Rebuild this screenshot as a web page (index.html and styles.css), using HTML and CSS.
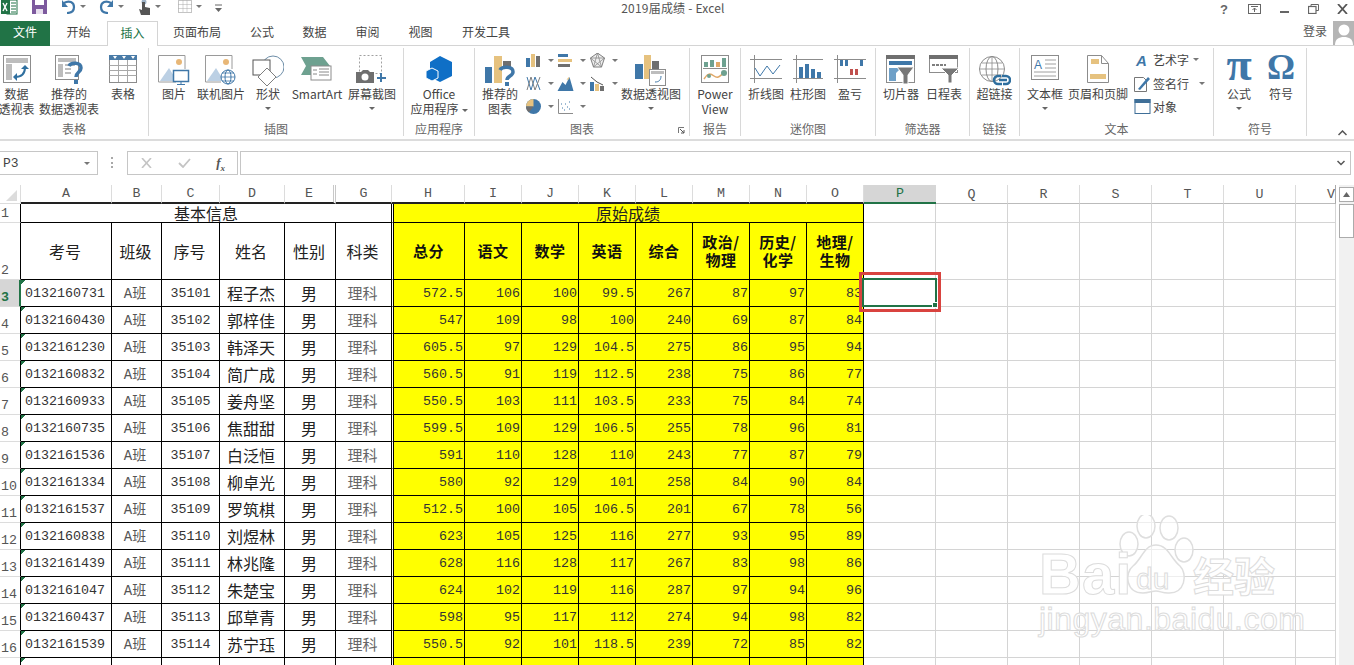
FILE: index.html
```html
<!DOCTYPE html>
<html lang="zh-CN">
<head>
<meta charset="utf-8">
<title>2019届成绩 - Excel</title>
<link rel="stylesheet" href="styles.css">
</head>
<body>
<div class="app">
  <header class="titlebar">
    <div class="qat">
      <svg class="q-x" width="17" height="15" viewBox="0 0 17 15"><rect x="6" y="0" width="10" height="14" fill="#fff" stroke="#217346"/><path d="M10 3h5M10 6h5M10 9h5M10 12h5" stroke="#217346"/><rect x="0" y="0" width="9" height="14" fill="#217346"/><path d="M2 3l4 8M6 3l-4 8" stroke="#fff" stroke-width="1.4"/></svg>
      <svg class="q-s" width="15" height="14" viewBox="0 0 15 14"><path d="M0 0h15v14H0z" fill="#7d5a9e"/><rect x="3" y="0" width="9" height="5" fill="#fff"/><rect x="4" y="9" width="7" height="5" fill="#e8e0ee"/></svg>
      <svg class="q-u" width="15" height="14" viewBox="0 0 15 14"><path d="M3 3c5-3 10-1 10 4s-4 6-7 6" fill="none" stroke="#3f77a8" stroke-width="2.2"/><path d="M1 0v7h6z" fill="#3f77a8"/></svg>
      <i class="mini q-c1"></i>
      <svg class="q-r" width="15" height="14" viewBox="0 0 15 14"><path d="M12 3C7 0 2 2 2 7s4 6 7 6" fill="none" stroke="#3f77a8" stroke-width="2.2"/><path d="M14 0v7H8z" fill="#3f77a8"/></svg>
      <i class="mini q-c2"></i>
      <svg class="q-t" width="13" height="15" viewBox="0 0 13 15"><circle cx="6" cy="2" r="2.5" fill="#9fb4c8"/><path d="M4 2h3v5l5 1v7H3L1 9l3 1z" fill="#555"/></svg>
      <i class="mini q-c3"></i>
      <svg class="q-g" width="14" height="13" viewBox="0 0 14 13"><rect x=".5" y=".5" width="13" height="12" fill="#fff" stroke="#888" stroke-dasharray="1 1"/><path d="M.5 4.5h13M.5 8.5h13M5 .5v12M9 .5v12" stroke="#aaa" stroke-dasharray="1 1"/></svg>
      <i class="mini q-c4"></i>
      <svg class="q-m" width="7" height="8" viewBox="0 0 7 8"><path d="M0 1h7" stroke="#666"/><path d="M0 4h7L3.500 8z" fill="#666"/></svg>
    </div>
    <div class="doc-title">2019届成绩 - Excel</div>
    <div class="winctl">
      <span class="help">?</span>
      <svg width="13" height="10" viewBox="0 0 13 10"><rect x=".5" y=".5" width="12" height="9" fill="none" stroke="#666"/><path d="M3 2.500h7M6.500 8V4M4.500 6l2-2 2 2" fill="none" stroke="#666"/></svg>
      <svg class="w-min" width="10" height="10" viewBox="0 0 10 10"><path d="M0 8h9" stroke="#666" stroke-width="2"/></svg>
      <svg width="11" height="10" viewBox="0 0 11 10"><path d="M3 2.500V.5h7.500v6H8" fill="none" stroke="#666"/><rect x=".5" y="2.500" width="7.500" height="7" fill="none" stroke="#666" stroke-width="1.200"/></svg>
      <svg width="11" height="10" viewBox="0 0 11 10"><path d="M1 0l9 10M10 0L1 10" stroke="#555" stroke-width="1.800"/></svg>
    </div>
  </header>

  <nav class="tabs">
    <div class="tab file">文件</div>
    <div class="tab w57">开始</div>
    <div class="tab active">插入</div>
    <div class="tab w78">页面布局</div>
    <div class="tab w52">公式</div>
    <div class="tab w53">数据</div>
    <div class="tab w53">审阅</div>
    <div class="tab w53">视图</div>
    <div class="tab w78">开发工具</div>
    <div class="login">登录</div>
    <div class="avatar"><svg width="21" height="24" viewBox="0 0 21 24"><rect width="21" height="24" fill="#b5b5b5"/><circle cx="11" cy="9" r="5.500" fill="#fff"/><path d="M2 24c0-6 4-8 9-8s9 2 9 8z" fill="#fff"/></svg></div>
  </nav>

  <section class="ribbon">
    <div class="group g1">
      <div class="items">
        <div class="item w37 first"><div class="icon"><svg width="28" height="28" viewBox="0 0 28 28"><rect x=".5" y=".5" width="27" height="27" fill="#fff" stroke="#8c8c8c"/><rect x="3" y="3" width="22" height="5" fill="#bdbdbd"/><rect x="3" y="9" width="6" height="16" fill="#bdbdbd"/><path d="M12 22c6 0 10-3 10-10" fill="none" stroke="#2f6f9f" stroke-width="2"/><path d="M18 14l4-4 4 4zM14 18v8l-4-4z" fill="#2f6f9f"/></svg></div><div class="lbl">数据<br>透视表</div></div>
        <div class="item w68"><div class="icon"><svg width="28" height="30" viewBox="0 0 28 30"><rect x=".5" y=".5" width="23" height="24" fill="#fff" stroke="#8c8c8c"/><rect x="3" y="3" width="18" height="4" fill="#bdbdbd"/><rect x="3" y="9" width="5" height="13" fill="#bdbdbd"/><path d="M10 10h10M10 14h6M10 18h6" stroke="#bdbdbd" stroke-width="2"/><path d="M14 11c2-4 12-4 12 2 0 4-5 4-5 9" fill="none" stroke="#3f77a8" stroke-width="3.500"/><rect x="19" y="25" width="4" height="4" fill="#3f77a8"/></svg></div><div class="lbl">推荐的<br>数据透视表</div></div>
        <div class="item w40"><div class="icon"><svg width="28" height="28" viewBox="0 0 28 28"><rect x=".5" y=".5" width="27" height="27" fill="#fff" stroke="#8c8c8c"/><rect x="0" y="0" width="28" height="5" fill="#4a7ba7"/><path d="M.5 10.500h27M.5 15.500h27M.5 20.500h27M9.500 5v22M18.500 5v22" stroke="#a8a8a8"/><path d="M4 1l2 3 2-3zM13 1l2 3 2-3zM22 1l2 3 2-3z" fill="#fff"/></svg></div><div class="lbl">表格</div></div>
      </div>
      <div class="gname">表格</div>
    </div>

    <div class="group g2">
      <div class="items">
        <div class="item w50"><div class="icon"><svg width="32" height="30" viewBox="0 0 32 30"><path d="M27 14V.5H.5V27H18" fill="#fff" stroke="#9a9a9a"/><circle cx="21" cy="7" r="3" fill="#e8b777"/><path d="M2 26l9-13 8 13z" fill="#bcd0e4"/><rect x="15.500" y="15.500" width="15" height="11" fill="#fff" stroke="#3f77a8" stroke-width="1.500"/><path d="M23 27v2M19 29.500h8" stroke="#3f77a8"/></svg></div><div class="lbl">图片</div></div>
        <div class="item w44"><div class="icon"><svg width="32" height="30" viewBox="0 0 32 30"><path d="M27 14V.5H.5V27H16" fill="#fff" stroke="#9a9a9a"/><circle cx="21" cy="7" r="3" fill="#e8b777"/><path d="M2 26l9-13 8 13z" fill="#bcd0e4"/><circle cx="23" cy="22" r="7" fill="#fff" stroke="#3f77a8"/><ellipse cx="23" cy="22" rx="3" ry="7" fill="none" stroke="#3f77a8"/><path d="M16 22h14M17 18h12M17 26h12" stroke="#3f77a8" stroke-width=".8"/></svg></div><div class="lbl">联机图片</div></div>
        <div class="item w50"><div class="icon"><svg width="32" height="32" viewBox="0 0 32 32"><circle cx="21" cy="12" r="11" fill="#fff" stroke="#6e8ea8"/><rect x="1" y="5" width="17" height="15" fill="#fff" stroke="#555"/><path d="M15 13l9 9-9 9-9-9z" fill="#fff" stroke="#7f7f7f"/></svg></div><div class="lbl">形状<i class="caret"></i></div></div>
        <div class="item w48"><div class="icon"><svg width="32" height="28" viewBox="0 0 32 28"><path d="M0 2h22l7 9-7 9H0l5-9z" fill="#6ea190"/><rect x="10" y="11" width="20" height="14" fill="#fff" stroke="#8c8c8c"/><path d="M18 14h10M18 17h10M18 20h10M12 15h4M12 19h4" stroke="#888"/></svg></div><div class="lbl">SmartArt</div></div>
        <div class="item w62"><div class="icon"><svg width="32" height="30" viewBox="0 0 32 30"><rect x="3.500" y=".5" width="22" height="18" fill="none" stroke="#a0a0a0" stroke-dasharray="2 2"/><path d="M0 17h5l2-2h5l2 2h4v11H0z" fill="#6f6f6f"/><circle cx="9" cy="22" r="3.500" fill="#fff"/><path d="M25 18v9M21 23h9" stroke="#3f77a8" stroke-width="2"/></svg></div><div class="lbl">屏幕截图<i class="caret"></i></div></div>
      </div>
      <div class="gname">插图</div>
    </div>

    <div class="group g3">
      <div class="items">
        <div class="item w70"><div class="icon"><svg width="30" height="30" viewBox="0 0 30 30"><path d="M16 1l12 6v14l-12 6-6-3v-8l-4-2V7z" fill="#0f6fc6"/><path d="M8 13l6 3v7l-6 3-6-3v-7z" fill="#0f6fc6" stroke="#fff"/></svg></div><div class="lbl">Office<br>应用程序<i class="caret side"></i></div></div>
      </div>
      <div class="gname">应用程序</div>
    </div>

    <div class="group g4">
      <div class="items">
        <div class="item w50"><div class="icon"><svg width="30" height="32" viewBox="0 0 30 32"><rect x="0" y="12" width="7" height="16" fill="#3f77a8"/><rect x="9" y="1" width="8" height="27" fill="#e6c27f"/><rect x="18" y="6" width="8" height="6" fill="#6f6f6f"/><path d="M15 15c2-4 13-4 13 2 0 4-6 4-6 8" fill="none" stroke="#3f77a8" stroke-width="3.500"/><rect x="20" y="27" width="4" height="4" fill="#3f77a8"/></svg></div><div class="lbl">推荐的<br>图表</div></div>
        <div class="smallcol w32">
          <div class="sm"><svg width="15" height="13" viewBox="0 0 15 13"><rect y="4" width="4" height="9" fill="#3f77a8"/><rect x="5" width="4" height="13" fill="#e6c27f"/><rect x="10" y="2" width="4" height="11" fill="#6f6f6f"/></svg><i class="mini"></i></div>
          <div class="sm"><svg width="15" height="15" viewBox="0 0 15 15"><path d="M1 1l4 13 4-13 5 13" fill="none" stroke="#3f77a8"/><path d="M1 14l4-13 4 13 5-13" fill="none" stroke="#7f7f7f"/></svg><i class="mini"></i></div>
          <div class="sm"><svg width="15" height="15" viewBox="0 0 15 15"><circle cx="7.500" cy="7.500" r="7.500" fill="#3f77a8"/><path d="M7.500 7.500V0A7.500 7.500 0 0 0 0 7.500z" fill="#e6c27f"/><path d="M7.500 7.500H0a7.500 7.500 0 0 0 3 6z" fill="#6f6f6f"/></svg><i class="mini"></i></div>
        </div>
        <div class="smallcol w32">
          <div class="sm"><svg width="15" height="14" viewBox="0 0 15 14"><rect width="10" height="3" fill="#3f77a8"/><rect y="5" width="14" height="3" fill="#e6c27f"/><rect y="10" width="12" height="3" fill="#6f6f6f"/></svg><i class="mini"></i></div>
          <div class="sm"><svg width="16" height="14" viewBox="0 0 16 14"><path d="M0 14l5-9 3 3 4-8 4 14z" fill="#3f77a8"/><path d="M9 3l2-3 1 2z" fill="#e6c27f"/></svg><i class="mini"></i></div>
          <div class="sm"><svg width="15" height="15" viewBox="0 0 15 15"><path d="M.5 0v14.500H15" fill="none" stroke="#8c8c8c"/><path d="M4 9h1M7 5h1M9 8h1M11 3h1M6 11h1M11 10h1M3 5h1" stroke="#3f77a8"/></svg><i class="mini"></i></div>
        </div>
        <div class="smallcol w32">
          <div class="sm"><svg width="16" height="15" viewBox="0 0 16 15"><path d="M8 0l7 5-3 9H4L1 5z" fill="#eee" stroke="#7f7f7f"/><path d="M8 0l-4 14M8 0l4 14M1 5l11 9M15 5L4 14M1 5h14" stroke="#7f7f7f" stroke-width=".7"/></svg><i class="mini"></i></div>
          <div class="sm"><svg width="15" height="15" viewBox="0 0 15 15"><rect y="6" width="4" height="9" fill="#3f77a8"/><rect x="5" y="8" width="4" height="7" fill="#e6c27f"/><rect x="10" y="10" width="4" height="5" fill="#6f6f6f"/><path d="M1 1l6 5 6 3" fill="none" stroke="#555"/></svg><i class="mini"></i></div>
        </div>
        <div class="item w60"><div class="icon"><svg width="32" height="32" viewBox="0 0 32 32"><rect x="0" y="9" width="8" height="15" fill="#3f77a8"/><rect x="9" y="0" width="7" height="24" fill="#e6c27f"/><rect x="17" y="6" width="7" height="11" fill="#6f6f6f"/><rect x="14.500" y="14.500" width="16" height="16" fill="#fff" stroke="#8c8c8c"/><rect x="16" y="16" width="13" height="3" fill="#bdbdbd"/><path d="M20 27c4 0 6-2 6-6" fill="none" stroke="#3f77a8"/></svg></div><div class="lbl">数据透视图<i class="caret"></i></div></div>
      </div>
      <div class="gname">图表</div>
      <svg class="launcher" width="7" height="7" viewBox="0 0 7 7"><path d="M.5 6V.5H6" fill="none" stroke="#777"/><path d="M2 2l4 4M6 3v3H3" fill="none" stroke="#555"/></svg>
    </div>

    <div class="group g5">
      <div class="items">
        <div class="item w50"><div class="icon"><svg width="28" height="28" viewBox="0 0 28 28"><rect x=".5" y=".5" width="27" height="27" fill="#fff" stroke="#8c8c8c"/><path d="M2 13.500h24" stroke="#8c8c8c"/><rect x="3" y="7" width="4" height="5" fill="#6ea190"/><rect x="9" y="5" width="4" height="7" fill="#6ea190"/><rect x="15" y="7" width="4" height="5" fill="#e0a868"/><rect x="21" y="3" width="4" height="9" fill="#6ea190"/><path d="M3 24c4-6 6-6 10-3s6 0 11-4" fill="none" stroke="#e0a868" stroke-width="1.500"/><circle cx="23" cy="18" r="3" fill="#6ea190"/><circle cx="8" cy="21" r="2" fill="#6ea190"/></svg></div><div class="lbl">Power<br>View</div></div>
      </div>
      <div class="gname">报告</div>
    </div>

    <div class="group g6">
      <div class="items">
        <div class="item w50"><div class="icon"><svg width="32" height="28" viewBox="0 0 32 28"><path d="M4.500 0v28M0 4.500h32M0 23.500h32" stroke="#8c8c8c"/><path d="M5 13l5 8 7-10 6 8 7-9" fill="none" stroke="#3f77a8"/></svg></div><div class="lbl">折线图</div></div>
        <div class="item w34"><div class="icon"><svg width="30" height="28" viewBox="0 0 30 28"><path d="M3.500 0v28M0 4.500h30M0 23.500h30" stroke="#8c8c8c"/><rect x="6" y="12" width="4" height="11" fill="#3f77a8"/><rect x="12" y="9" width="4" height="14" fill="#3f77a8"/><rect x="18" y="14" width="4" height="9" fill="#3f77a8"/><rect x="24" y="17" width="4" height="6" fill="#3f77a8"/></svg></div><div class="lbl">柱形图</div></div>
        <div class="item w50"><div class="icon"><svg width="32" height="28" viewBox="0 0 32 28"><path d="M3.500 0v28M0 4.500h32M0 23.500h32" stroke="#8c8c8c"/><rect x="6" y="5" width="3" height="6" fill="#3f77a8"/><rect x="11" y="5" width="3" height="6" fill="#3f77a8"/><rect x="16" y="14" width="3" height="6" fill="#c0504d"/><rect x="21" y="14" width="3" height="6" fill="#c0504d"/><rect x="26" y="5" width="3" height="6" fill="#3f77a8"/></svg></div><div class="lbl">盈亏</div></div>
      </div>
      <div class="gname">迷你图</div>
    </div>

    <div class="group g7">
      <div class="items">
        <div class="item w50"><div class="icon"><svg width="30" height="30" viewBox="0 0 30 30"><rect x=".5" y=".5" width="28" height="27" fill="#fff" stroke="#8c8c8c"/><rect width="29" height="4" fill="#6f6f6f"/><rect x="3" y="6" width="23" height="4" fill="#3f77a8"/><path d="M3 13h12L10 18v8h-7z" fill="#6ea0c8"/><path d="M11 12h17l-6 8v9h-5v-9z" fill="#777" stroke="#fff"/></svg></div><div class="lbl">切片器</div></div>
        <div class="item w36"><div class="icon"><svg width="30" height="28" viewBox="0 0 30 28"><rect x=".5" y=".5" width="28" height="17" fill="#fff" stroke="#8c8c8c"/><rect width="29" height="4" fill="#6f6f6f"/><path d="M3 10h14" stroke="#7f7f7f" stroke-width="2" stroke-dasharray="3 1"/><path d="M12 13h18l-7 7v8h-4v-8z" fill="#777" stroke="#fff"/></svg></div><div class="lbl">日程表</div></div>
      </div>
      <div class="gname">筛选器</div>
    </div>

    <div class="group g8">
      <div class="items">
        <div class="item w49"><div class="icon"><svg width="32" height="32" viewBox="0 0 32 32"><circle cx="13" cy="14" r="12.500" fill="#fff" stroke="#8c8c8c"/><ellipse cx="13" cy="14" rx="6" ry="12.500" fill="none" stroke="#8c8c8c"/><path d="M1 14h24M3 8h20M3 20h20M13 1v26" stroke="#8c8c8c" stroke-width=".8"/><path d="M22 21h-3a4 4 0 0 0 0 8h4M23 21h4a4 4 0 0 1 0 8h-3M20 25h8" fill="none" stroke="#2f6f9f" stroke-width="2.500"/></svg></div><div class="lbl">超链接</div></div>
      </div>
      <div class="gname">链接</div>
    </div>

    <div class="group g9">
      <div class="items">
        <div class="item w50"><div class="icon"><svg width="28" height="26" viewBox="0 0 28 26"><rect x=".5" y=".5" width="27" height="24" fill="#fff" stroke="#8c8c8c"/><text x="3" y="14" class="svgA">A</text><path d="M14 5h11M14 9h11M14 13h11M3 17h22M3 21h22" stroke="#a0a0a0"/></svg></div><div class="lbl">文本框<i class="caret"></i></div></div>
        <div class="item w56"><div class="icon"><svg width="22" height="28" viewBox="0 0 22 28"><path d="M.5.5h14l7 8v19H.5z" fill="#fff" stroke="#8c8c8c"/><path d="M14.500.5v8h7" fill="none" stroke="#8c8c8c"/><rect x="4" y="4" width="8" height="5" fill="#e6c27f"/><rect x="3" y="19" width="16" height="5" fill="#e6c27f"/></svg></div><div class="lbl">页眉和页脚</div></div>
        <div class="textcol">
          <div class="tr"><svg width="15" height="14" viewBox="0 0 15 14"><text x="1" y="13" class="svgWA">A</text></svg><span>艺术字</span><i class="mini"></i></div>
          <div class="tr"><svg width="17" height="17" viewBox="0 0 17 17"><path d="M.5 2.500h9l3 3v11H.5z" fill="#fff" stroke="#777"/><path d="M4 14l10-12 2 2L6 15z" fill="#3f77a8"/></svg><span>签名行</span><i class="mini far"></i></div>
          <div class="tr"><svg width="16" height="15" viewBox="0 0 16 15"><rect x=".5" y=".5" width="15" height="14" fill="#fff" stroke="#3f6f98"/><rect width="16" height="4" fill="#3f6f98"/></svg><span>对象</span></div>
        </div>
      </div>
      <div class="gname">文本</div>
    </div>

    <div class="group g10">
      <div class="items">
        <div class="item w50"><div class="icon"><span class="sym pi">π</span></div><div class="lbl">公式<i class="caret"></i></div></div>
        <div class="item w34"><div class="icon"><span class="sym om">Ω</span></div><div class="lbl">符号</div></div>
      </div>
      <div class="gname">符号</div>
    </div>
    <svg class="collapse" width="9" height="6" viewBox="0 0 9 6"><path d="M.5 5l4-4 4 4" fill="none" stroke="#555" stroke-width="1.500"/></svg>
  </section>

  <section class="fbar">
    <div class="namebox"><span>P3</span><i class="mini"></i></div>
    <div class="dots"></div>
    <div class="fbtns">
      <svg width="11" height="10" viewBox="0 0 11 10"><path d="M1 0l9 10M10 0L1 10" stroke="#c4c4c4" stroke-width="1.600"/></svg>
      <svg width="13" height="10" viewBox="0 0 13 10"><path d="M1 5l4 4 7-8" fill="none" stroke="#c4c4c4" stroke-width="1.800"/></svg>
      <span class="fx">f<sub>x</sub></span>
    </div>
    <div class="finput"><svg width="8" height="6" viewBox="0 0 8 6"><path d="M.5 1L4 4.500 7.500 1" fill="none" stroke="#555" stroke-width="1.500"/></svg></div>
  </section>

  <section class="sheet">
    <table class="grid">
      <colgroup>
        <col class="c21"><col class="c91"><col class="c50"><col class="c58"><col class="c65"><col class="c51"><col class="c56"><col class="c73"><col class="c57"><col class="c57"><col class="c57"><col class="c57"><col class="c57"><col class="c57"><col class="c57"><col class="c72"><col class="c72"><col class="c72"><col class="c72"><col class="c72"><col class="c72"><col class="c40">
      </colgroup>
      <tr class="ch">
        <th class="corner"><i></i></th><th>A</th><th>B</th><th>C</th><th>D</th><th class="hid">E</th><th>G</th><th>H</th><th>I</th><th>J</th><th>K</th><th>L</th><th>M</th><th>N</th><th>O</th><th class="sel">P</th><th class="g">Q</th><th class="g">R</th><th class="g">S</th><th class="g">T</th><th class="g">U</th><th class="g vv">V</th>
      </tr>
      <tr class="r1">
        <th class="rh">1</th><td colspan="6" class="merged">基本信息</td><td colspan="8" class="merged yel hl">原始成绩</td><td class="e"></td><td class="e"></td><td class="e"></td><td class="e"></td><td class="e"></td><td class="e"></td><td class="e"></td>
      </tr>
      <tr class="r2">
        <th class="rh">2</th><td>考号</td><td>班级</td><td>序号</td><td>姓名</td><td>性别</td><td>科类</td><td class="yh hl">总分</td><td class="yh">语文</td><td class="yh">数学</td><td class="yh">英语</td><td class="yh">综合</td><td class="yh">政治/<br>物理</td><td class="yh">历史/<br>化学</td><td class="yh">地理/<br>生物</td><td class="e"></td><td class="e"></td><td class="e"></td><td class="e"></td><td class="e"></td><td class="e"></td><td class="e"></td>
      </tr>
      <tr>
        <th class="rh on">3</th><td class="id">0132160731</td><td class="cl">A班</td><td class="no">35101</td><td>程子杰</td><td>男</td><td class="su">理科</td><td class="v hl">572.5</td><td class="v">106</td><td class="v">100</td><td class="v">99.5</td><td class="v">267</td><td class="v">87</td><td class="v">97</td><td class="v">83</td><td class="e"></td><td class="e"></td><td class="e"></td><td class="e"></td><td class="e"></td><td class="e"></td><td class="e"></td>
      </tr>
      <tr>
        <th class="rh">4</th><td class="id">0132160430</td><td class="cl">A班</td><td class="no">35102</td><td>郭梓佳</td><td>男</td><td class="su">理科</td><td class="v hl">547</td><td class="v">109</td><td class="v">98</td><td class="v">100</td><td class="v">240</td><td class="v">69</td><td class="v">87</td><td class="v">84</td><td class="e"></td><td class="e"></td><td class="e"></td><td class="e"></td><td class="e"></td><td class="e"></td><td class="e"></td>
      </tr>
      <tr>
        <th class="rh">5</th><td class="id">0132161230</td><td class="cl">A班</td><td class="no">35103</td><td>韩泽天</td><td>男</td><td class="su">理科</td><td class="v hl">605.5</td><td class="v">97</td><td class="v">129</td><td class="v">104.5</td><td class="v">275</td><td class="v">86</td><td class="v">95</td><td class="v">94</td><td class="e"></td><td class="e"></td><td class="e"></td><td class="e"></td><td class="e"></td><td class="e"></td><td class="e"></td>
      </tr>
      <tr>
        <th class="rh">6</th><td class="id">0132160832</td><td class="cl">A班</td><td class="no">35104</td><td>简广成</td><td>男</td><td class="su">理科</td><td class="v hl">560.5</td><td class="v">91</td><td class="v">119</td><td class="v">112.5</td><td class="v">238</td><td class="v">75</td><td class="v">86</td><td class="v">77</td><td class="e"></td><td class="e"></td><td class="e"></td><td class="e"></td><td class="e"></td><td class="e"></td><td class="e"></td>
      </tr>
      <tr>
        <th class="rh">7</th><td class="id">0132160933</td><td class="cl">A班</td><td class="no">35105</td><td>姜舟坚</td><td>男</td><td class="su">理科</td><td class="v hl">550.5</td><td class="v">103</td><td class="v">111</td><td class="v">103.5</td><td class="v">233</td><td class="v">75</td><td class="v">84</td><td class="v">74</td><td class="e"></td><td class="e"></td><td class="e"></td><td class="e"></td><td class="e"></td><td class="e"></td><td class="e"></td>
      </tr>
      <tr>
        <th class="rh">8</th><td class="id">0132160735</td><td class="cl">A班</td><td class="no">35106</td><td>焦甜甜</td><td>男</td><td class="su">理科</td><td class="v hl">599.5</td><td class="v">109</td><td class="v">129</td><td class="v">106.5</td><td class="v">255</td><td class="v">78</td><td class="v">96</td><td class="v">81</td><td class="e"></td><td class="e"></td><td class="e"></td><td class="e"></td><td class="e"></td><td class="e"></td><td class="e"></td>
      </tr>
      <tr>
        <th class="rh">9</th><td class="id">0132161536</td><td class="cl">A班</td><td class="no">35107</td><td>白泛恒</td><td>男</td><td class="su">理科</td><td class="v hl">591</td><td class="v">110</td><td class="v">128</td><td class="v">110</td><td class="v">243</td><td class="v">77</td><td class="v">87</td><td class="v">79</td><td class="e"></td><td class="e"></td><td class="e"></td><td class="e"></td><td class="e"></td><td class="e"></td><td class="e"></td>
      </tr>
      <tr>
        <th class="rh">10</th><td class="id">0132161334</td><td class="cl">A班</td><td class="no">35108</td><td>柳卓光</td><td>男</td><td class="su">理科</td><td class="v hl">580</td><td class="v">92</td><td class="v">129</td><td class="v">101</td><td class="v">258</td><td class="v">84</td><td class="v">90</td><td class="v">84</td><td class="e"></td><td class="e"></td><td class="e"></td><td class="e"></td><td class="e"></td><td class="e"></td><td class="e"></td>
      </tr>
      <tr>
        <th class="rh">11</th><td class="id">0132161537</td><td class="cl">A班</td><td class="no">35109</td><td>罗筑棋</td><td>男</td><td class="su">理科</td><td class="v hl">512.5</td><td class="v">100</td><td class="v">105</td><td class="v">106.5</td><td class="v">201</td><td class="v">67</td><td class="v">78</td><td class="v">56</td><td class="e"></td><td class="e"></td><td class="e"></td><td class="e"></td><td class="e"></td><td class="e"></td><td class="e"></td>
      </tr>
      <tr>
        <th class="rh">12</th><td class="id">0132160838</td><td class="cl">A班</td><td class="no">35110</td><td>刘煜林</td><td>男</td><td class="su">理科</td><td class="v hl">623</td><td class="v">105</td><td class="v">125</td><td class="v">116</td><td class="v">277</td><td class="v">93</td><td class="v">95</td><td class="v">89</td><td class="e"></td><td class="e"></td><td class="e"></td><td class="e"></td><td class="e"></td><td class="e"></td><td class="e"></td>
      </tr>
      <tr>
        <th class="rh">13</th><td class="id">0132161439</td><td class="cl">A班</td><td class="no">35111</td><td>林兆隆</td><td>男</td><td class="su">理科</td><td class="v hl">628</td><td class="v">116</td><td class="v">128</td><td class="v">117</td><td class="v">267</td><td class="v">83</td><td class="v">98</td><td class="v">86</td><td class="e"></td><td class="e"></td><td class="e"></td><td class="e"></td><td class="e"></td><td class="e"></td><td class="e"></td>
      </tr>
      <tr>
        <th class="rh">14</th><td class="id">0132161047</td><td class="cl">A班</td><td class="no">35112</td><td>朱楚宝</td><td>男</td><td class="su">理科</td><td class="v hl">624</td><td class="v">102</td><td class="v">119</td><td class="v">116</td><td class="v">287</td><td class="v">97</td><td class="v">94</td><td class="v">96</td><td class="e"></td><td class="e"></td><td class="e"></td><td class="e"></td><td class="e"></td><td class="e"></td><td class="e"></td>
      </tr>
      <tr>
        <th class="rh">15</th><td class="id">0132160437</td><td class="cl">A班</td><td class="no">35113</td><td>邱草青</td><td>男</td><td class="su">理科</td><td class="v hl">598</td><td class="v">95</td><td class="v">117</td><td class="v">112</td><td class="v">274</td><td class="v">94</td><td class="v">98</td><td class="v">82</td><td class="e"></td><td class="e"></td><td class="e"></td><td class="e"></td><td class="e"></td><td class="e"></td><td class="e"></td>
      </tr>
      <tr>
        <th class="rh">16</th><td class="id">0132161539</td><td class="cl">A班</td><td class="no">35114</td><td>苏宁珏</td><td>男</td><td class="su">理科</td><td class="v hl">550.5</td><td class="v">92</td><td class="v">101</td><td class="v">118.5</td><td class="v">239</td><td class="v">72</td><td class="v">85</td><td class="v">82</td><td class="e"></td><td class="e"></td><td class="e"></td><td class="e"></td><td class="e"></td><td class="e"></td><td class="e"></td>
      </tr>
      <tr>
        <th class="rh"></th><td class="id"></td><td></td><td></td><td></td><td></td><td></td><td class="v hl"></td><td class="v"></td><td class="v"></td><td class="v"></td><td class="v"></td><td class="v"></td><td class="v"></td><td class="v"></td><td class="e"></td><td class="e"></td><td class="e"></td><td class="e"></td><td class="e"></td><td class="e"></td><td class="e"></td>
      </tr>
    </table>

    <aside class="vscroll">
      <div class="sb-up"><svg width="7" height="5" viewBox="0 0 7 5"><path d="M0 5l3.500-5L7 5z" fill="#666"/></svg></div>
      <div class="sb-thumb"></div>
    </aside>

    <div class="cursor"><i></i></div>
    <div class="callout"></div>

    <div class="wm">
      <svg class="wm-paw" width="78" height="86" viewBox="0 0 78 86"><g fill="#fff" fill-opacity=".6" stroke="#dedede" stroke-width="1.500"><ellipse cx="11" cy="29" rx="9" ry="12"/><ellipse cx="28" cy="11" rx="9" ry="12"/><ellipse cx="51" cy="13" rx="9" ry="12"/><ellipse cx="66" cy="35" rx="9" ry="12"/><path d="M38 30c12 0 15 14 24 21 8 8 5 28-12 27-6 0-8-2-12-2s-7 2-13 2C8 78 6 58 15 51c9-7 11-21 23-21z"/></g></svg>
      <div class="wm-bai">Bai</div>
      <div class="wm-du">du</div>
      <div class="wm-jy">经验</div>
      <div class="wm-url">jingyan.baidu.com</div>
    </div>
  </section>
</div>
</body>
</html>
```
FILE: styles.css
```css
* { box-sizing: border-box; }
html, body { margin: 0; padding: 0; height: 100%; overflow: hidden; background: #fff; }
body { font-family: "Noto Sans CJK SC", "Liberation Sans", sans-serif; font-size: 12px; color: #444; }
.app { width: 1354px; height: 665px; overflow: hidden; display: flex; flex-direction: column; }
i { display: block; font-style: normal; }

/* title bar */
.titlebar { height: 21px; display: flex; align-items: flex-start; position: relative; flex: none; }
.qat { display: flex; align-items: flex-start; width: 300px; padding-left: 1px; }
.qat svg { flex: none; }
.q-s { margin-left: 14px; }
.q-u { margin-left: 14px; }
.q-r { margin-left: 13px; }
.q-t { margin-left: 14px; }
.q-g { margin-left: 17px; }
.q-m { margin-left: 13px; margin-top: 4px; }
.mini { width: 0; height: 0; border: 3px solid transparent; border-top: 3px solid #777; border-bottom: 0; flex: none; }
.q-c1, .q-c2, .q-c3, .q-c4 { margin-left: 4px; margin-top: 5px; }
.doc-title { position: absolute; left: 0; right: 0; top: 0; text-align: center; padding-right: 8px; line-height: 16px; font-size: 12px; color: #555; letter-spacing: .2px; pointer-events: none; }
.winctl { margin-left: auto; width: 134px; display: flex; align-items: center; justify-content: space-between; height: 14px; margin-top: 2px; padding: 0 6px 0 0; }
.help { font: bold 13px "Liberation Sans", sans-serif; color: #666; width: 10px; }

/* tabs */
.tabs { height: 25px; flex: none; display: flex; align-items: stretch; border-bottom: 1px solid #d4d4d4; }
.tab { text-align: center; line-height: 22px; color: #444; flex: none; }
.tab.file { width: 50px; background: #217346; color: #fff; margin-bottom: -1px; }
.tab.active { width: 51px; color: #217346; background: #fff; border: 1px solid #d4d4d4; border-bottom: 0; margin-bottom: -1px; position: relative; z-index: 1; }
.w57 { width: 57px; } .w78 { width: 78px; } .w52 { width: 52px; } .w53 { width: 53px; }
.login { margin-left: auto; line-height: 20px; margin-right: 6px; color: #555; }
.avatar { width: 21px; height: 24px; flex: none; }
.avatar svg { display: block; }

/* ribbon */
.ribbon { height: 95px; flex: none; display: flex; padding-top: 2px; border-bottom: 2px solid #dcdcdc; position: relative; }
.group { height: 88px; border-right: 1px solid #d8d8d8; display: flex; flex-direction: column; flex: none; position: relative; }
.g1 { width: 149px; } .g2 { width: 255px; } .g3 { width: 71px; } .g4 { width: 215px; }
.g5 { width: 51px; } .g6 { width: 135px; } .g7 { width: 94px; } .g8 { width: 50px; }
.g9 { width: 194px; } .g10 { width: 93px; }
.items { height: 74px; display: flex; }
.gname { text-align: center; line-height: 14px; color: #666; }
.item { display: flex; flex-direction: column; align-items: center; flex: none; }
.first { margin-left: -2px; }
.icon { height: 38px; padding-top: 7px; display: flex; align-items: flex-start; justify-content: center; }
.icon svg { display: block; }
.lbl { text-align: center; white-space: nowrap; line-height: 15px; color: #444; }
.caret { width: 0; height: 0; margin: 6px auto 0; border: 3px solid transparent; border-top: 3px solid #666; border-bottom: 0; }
.caret.side { display: inline-block; margin: 0 0 2px 3px; }
.w37 { width: 37px; } .w68 { width: 68px; } .w40 { width: 40px; } .w50 { width: 50px; }
.w44 { width: 44px; } .w48 { width: 48px; } .w62 { width: 62px; } .w70 { width: 70px; }
.w32 { width: 32px; } .w60 { width: 60px; } .w34 { width: 34px; } .w36 { width: 36px; }
.w49 { width: 49px; } .w56 { width: 56px; }
.smallcol { display: flex; flex-direction: column; flex: none; padding-top: 1px; }
.sm { height: 23px; display: flex; align-items: center; gap: 6px; }
.sm svg { flex: none; width: 17px; }
.textcol { display: flex; flex-direction: column; flex: none; padding: 0 0 0 8px; }
.tr { height: 23.500px; display: flex; align-items: center; white-space: nowrap; }
.tr svg { flex: none; width: 17px; margin-right: 2px; }
.tr .mini { margin-left: 4px; }
.tr .mini.far { margin-left: 10px; }
.svgA { font: 12px "Liberation Sans", sans-serif; fill: #3f77a8; }
.svgWA { font: italic bold 15px "Liberation Sans", sans-serif; fill: #3f77a8; }
.sym { font: bold 35px/26px "Liberation Serif", serif; color: #3f77a8; height: 26px; display: block; }
.sym.pi { font-size: 46px; line-height: 20px; height: 20px; }
.launcher { position: absolute; right: 4px; bottom: 2px; }
.collapse { position: absolute; left: 1338px; top: 84px; }

/* formula bar */
.fbar { height: 44px; flex: none; display: flex; align-items: flex-start; padding-top: 10px; }
.namebox { width: 98px; height: 24px; border: 1px solid #c6c6c6; border-left: 0; display: flex; align-items: center; justify-content: space-between; padding: 0 7px 0 3px; font: 13px "Liberation Mono", monospace; color: #444; flex: none; }
.dots { width: 3px; height: 11px; margin: 6px 13px 0 13px; border-left: 2px dotted #a8a8a8; flex: none; }
.fbtns { width: 111px; height: 24px; border: 1px solid #c6c6c6; display: flex; align-items: center; justify-content: space-between; padding: 0 12px 0 13px; flex: none; }
.fx { font: italic bold 13px "Liberation Serif", serif; color: #555; line-height: 14px; }
.fx sub { font-size: 9px; line-height: 0; }
.finput { width: 1111px; height: 24px; margin-left: 2px; border: 1px solid #c6c6c6; display: flex; align-items: center; justify-content: flex-end; padding-right: 5px; flex: none; }

/* sheet */
.sheet { position: relative; flex: 1; overflow: hidden; }
.grid { table-layout: fixed; width: 1336px; border-collapse: separate; border-spacing: 0; }
.c21 { width: 21px; } .c91 { width: 91px; } .c50 { width: 50px; } .c58 { width: 58px; } .c65 { width: 65px; }
.c51 { width: 51px; } .c56 { width: 56px; } .c57 { width: 57px; } .c72 { width: 72px; } .c73 { width: 73px; } .c40 { width: 40px; }
.grid th, .grid td { padding: 0; overflow: hidden; white-space: nowrap; }
.ch th { height: 18px; font: 400 13.300px/17px "Liberation Mono", monospace; color: #555; text-align: center; border-right: 1px solid #dcdcdc; border-bottom: 2px solid #222; }
.ch .g { border-bottom: 1px solid #bbb; }
.ch .hid { border-right: 3px double #c8c8c8; }
.ch .vv { text-align: right; border-right: 1px solid #aaa; }
.ch .sel { background: #d6d6d6; color: #217346; border-bottom: 2px solid #217346; border-right: 0; }
.corner { position: relative; border-bottom: 1px solid #dcdcdc !important; }
.corner i { position: absolute; right: 3px; bottom: 2px; width: 0; height: 0; border-left: 11px solid transparent; border-bottom: 11px solid #dcdcdc; }
.rh { font: 400 13.300px/16px "Liberation Mono", monospace; color: #555; text-align: left; vertical-align: bottom; padding-left: 1px !important; border-right: 1px solid #000; border-bottom: 1px solid #dcdcdc; height: 27px; }
.rh.on { background: #d6d6d6; color: #217346; font-weight: 700; border-right: 2px solid #217346; }
.grid td { height: 27px; font-size: 16px; line-height: 20px; color: #222; text-align: center; border-right: 1px solid #000; border-bottom: 1px solid #000; padding-right: 2px; }
.grid .r1 th, .grid .r1 td { height: 19px; }
.grid .r2 th, .grid .r2 td { height: 57px; }
.grid td.merged { font-size: 16px; line-height: 17px; padding-right: 0; }
.yel { background: #ffff00; }
.grid td.yh { background: #ffff00; font-size: 15px; font-weight: 700; line-height: 18px; color: #111; letter-spacing: .5px; padding: 1px 0 2px; }
.grid td.id { font: 13.333px/20px "Liberation Mono", monospace; text-align: left; padding: 2px 0 0 4px; color: #333; background: linear-gradient(135deg, #217346 0, #217346 3.500px, transparent 3.500px) no-repeat; background-size: 6px 6px; }
.grid td.cl { font: 14px/20px "Liberation Mono", "Noto Sans CJK SC", monospace; color: #555; padding-right: 3px; padding-top: 1px; }
.grid td.no { font: 13.333px/20px "Liberation Mono", monospace; color: #333; padding: 2px 0 0; }
.grid td.su { font-size: 15px; color: #666; }
.grid td.v { font: 13.333px/20px "Liberation Mono", monospace; text-align: right; padding: 2px 1px 0 0; background: #ffff00; color: #333; }
.grid td.hl { border-left: 1px solid #fff; box-shadow: inset 1px 0 0 #000; }
.grid td.e { border-right: 1px solid #d4d4d4; border-bottom: 1px solid #d4d4d4; padding: 0; }

.vscroll { position: absolute; left: 1336px; top: 0; width: 18px; bottom: 0; background: #f1f1f1; border-left: 3px solid #fff; }
.sb-up { width: 15px; height: 15px; margin-top: 2px; background: #fff; border: 1px solid #ababab; display: flex; align-items: center; justify-content: center; }
.sb-thumb { width: 15px; height: 34px; margin-top: 2px; background: #fff; border: 1px solid #ababab; }
.cursor { position: absolute; left: 862px; top: 93px; width: 75px; height: 29px; border: 2px solid #217346; }
.cursor i { position: absolute; right: -3px; bottom: -3px; width: 6px; height: 6px; background: #217346; border: 1px solid #fff; }
.callout { position: absolute; left: 859px; top: 87px; width: 82px; height: 40px; border: 3px solid #d9433f; }

/* watermark */
.wm { position: absolute; left: 1030px; top: 330px; width: 260px; height: 130px; color: #fff; font-family: "Liberation Sans", sans-serif; font-weight: 700; -webkit-text-stroke: 1px #dcdcdc; }
.wm-paw { position: absolute; left: 88px; top: 0; }
.wm-bai { position: absolute; left: 9px; top: 29px; font-size: 58px; line-height: 60px; letter-spacing: 1px; }
.wm-du { position: absolute; left: 106px; top: 48px; font-size: 30px; line-height: 32px; font-weight: 400; }
.wm-jy { position: absolute; left: 163px; top: 36px; font: 700 41px/46px "Noto Sans CJK SC", sans-serif; }
.wm-url { position: absolute; left: 9px; top: 84px; font-size: 32px; line-height: 40px; font-weight: 400; white-space: nowrap; letter-spacing: .5px; }
```
